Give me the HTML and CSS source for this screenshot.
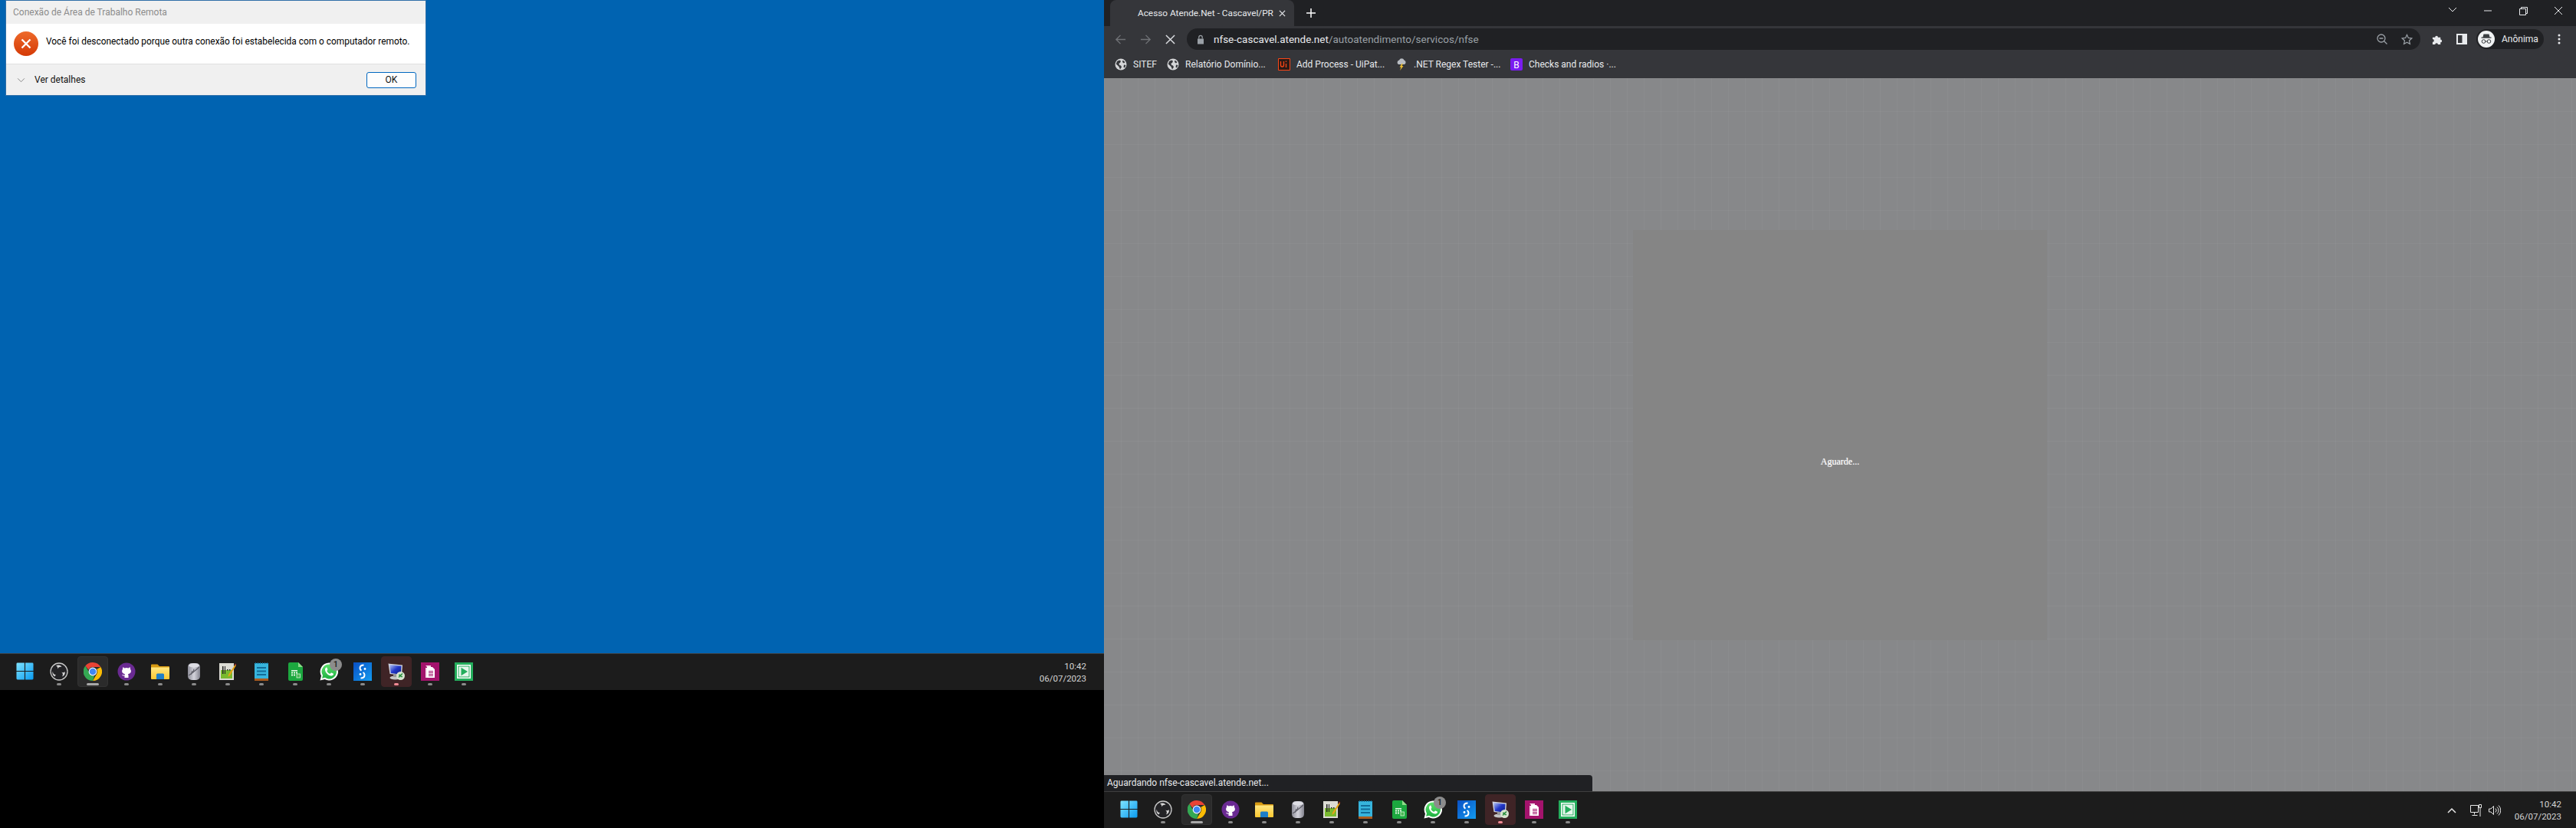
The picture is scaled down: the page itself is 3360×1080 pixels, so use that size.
FILE: index.html
```html
<!DOCTYPE html>
<html lang="pt-BR">
<head>
    <meta charset="UTF-8">
    <title>Área de trabalho</title>
    <link rel="stylesheet" href="styles.css">
</head>
<body>
    <!-- icones da barra de tarefas, usados nos dois monitores -->
    <svg class="defs" width="0" height="0">
        <defs>
            <linearGradient id="winGrad" x1="0" y1="0" x2="1" y2="1">
                <stop offset="0" stop-color="#7fe3ff"/>
                <stop offset="1" stop-color="#0a9bf0"/>
            </linearGradient>
            <linearGradient id="whatsGrad" x1="0" y1="0" x2="0" y2="1">
                <stop offset="0" stop-color="#5ee06c"/>
                <stop offset="1" stop-color="#1fb141"/>
            </linearGradient>
            <linearGradient id="sitefGrad" x1="0" y1="0" x2="1" y2="1">
                <stop offset="0" stop-color="#0a4fc4"/>
                <stop offset="1" stop-color="#129cf0"/>
            </linearGradient>
            <linearGradient id="errGrad" x1="0" y1="0" x2="0" y2="1">
                <stop offset="0" stop-color="#ee6a2a"/>
                <stop offset="1" stop-color="#d43a06"/>
            </linearGradient>
            <linearGradient id="folderGrad" x1="0" y1="0" x2="0" y2="1">
                <stop offset="0" stop-color="#ffe680"/>
                <stop offset="1" stop-color="#fbc730"/>
            </linearGradient>
            <linearGradient id="dbGrad" x1="0" y1="0" x2="1" y2="0">
                <stop offset="0" stop-color="#8d8d98"/>
                <stop offset="0.5" stop-color="#d4d4dc"/>
                <stop offset="1" stop-color="#83838e"/>
            </linearGradient>
            <linearGradient id="rdpGrad" x1="0" y1="0" x2="1" y2="1">
                <stop offset="0" stop-color="#b9c8f5"/>
                <stop offset="0.5" stop-color="#2237c8"/>
                <stop offset="1" stop-color="#0c1a80"/>
            </linearGradient>

            <symbol id="i-win" viewBox="0 0 24 24">
                <path fill="url(#winGrad)" d="M0.5 2A1.5 1.5 0 0 1 2 0.5h9.4v10.9H0.5zM12.6 0.5H22A1.5 1.5 0 0 1 23.5 2v9.4H12.6zM0.5 12.6h10.9v10.9H2A1.5 1.5 0 0 1 0.5 22zM12.6 12.6h10.9V22a1.5 1.5 0 0 1-1.5 1.5h-9.4z"/>
            </symbol>
            <symbol id="i-obs" viewBox="0 0 24 24">
                <circle cx="12" cy="12" r="11" fill="#232326" stroke="#c9c9c9" stroke-width="1.3"/>
                <path fill="#d6d6d6" d="M8 4.500a5 5 0 0 1 7.500 1.500 4.500 4.500 0 0 0-5.500 2.500 3 3 0 0 0-2-4zM19.500 12a5 5 0 0 1-3.500 6.500 4.500 4.500 0 0 0-1-6 3 3 0 0 0 4.500-0.500zM6.500 18.500a5 5 0 0 1-2.500-7 4.500 4.500 0 0 0 4 4.800 3 3 0 0 0-1.500 2.200z"/>
            </symbol>
            <symbol id="i-chrome" viewBox="0 0 24 24">
                <path fill="#ea4335" d="M12 0a12 12 0 0 1 10.400 6H12a6 6 0 0 0-5.600 3.800L2.400 4.500A12 12 0 0 1 12 0z"/>
                <path fill="#fbbc04" d="M22.400 6A12 12 0 0 1 12 24l5.200-9a6 6 0 0 0 0-6z"/>
                <path fill="#34a853" d="M2.400 4.500l4.800 8.500a6 6 0 0 0 7 4.500L12 24A12 12 0 0 1 2.400 4.500z"/>
                <circle cx="12" cy="12" r="5.400" fill="#fff"/>
                <circle cx="12" cy="12" r="4.300" fill="#3f87f4"/>
            </symbol>
            <symbol id="i-github" viewBox="0 0 24 24">
                <circle cx="12" cy="12" r="11.500" fill="#6a2a92"/>
                <path fill="#fff" d="M9.500 20v-2.500c-2.500 0.500-3-1-3.500-1.800 1.200 0 1.700 1.300 3.600 0.800 0-0.600 0.200-1 0.500-1.300-2.300-0.300-4-1.400-4-4 0-1 0.300-1.800 1-2.500-0.200-0.600-0.200-1.500 0.100-2.200 0.900 0 1.800 0.500 2.400 1a8 8 0 0 1 4.800 0c0.600-0.500 1.500-1 2.400-1 0.300 0.700 0.300 1.600 0.100 2.200 0.700 0.700 1 1.500 1 2.500 0 2.600-1.700 3.700-4 4 0.400 0.400 0.600 1 0.600 1.700V20z"/>
            </symbol>
            <symbol id="i-folder" viewBox="0 0 24 24">
                <path fill="#d79a12" d="M0 3.500a1 1 0 0 1 1-1h7.500l2.500 2.500h12a1 1 0 0 1 1 1V12H0z"/>
                <path fill="url(#folderGrad)" d="M0 6.500h24V21a1 1 0 0 1-1 1H1a1 1 0 0 1-1-1z"/>
                <path fill="#1e7fc8" d="M7 16a1.500 1.500 0 0 1 1.500-1.500h7A1.500 1.500 0 0 1 17 16v6H7z"/>
            </symbol>
            <symbol id="i-db" viewBox="0 0 24 24">
                <rect x="4" y="1" width="16" height="22" rx="5" fill="url(#dbGrad)"/>
                <ellipse cx="12" cy="4" rx="7" ry="2.500" fill="#dedee4"/>
                <path fill="none" stroke="#5c5c66" stroke-width="1.200" d="M5 17C9 15 14 10 19 6M8 16l2-5M11 13.500l1-5"/>
            </symbol>
            <symbol id="i-notepad" viewBox="0 0 24 24">
                <path fill="#dcdcd4" d="M1 1h19v22H1z"/>
                <path fill="#79b92e" d="M3 10h15v11H3z"/>
                <path fill="#222" d="M5 5h1.500v10H5zM8 5h1v10H8zM11 9h1.500v1.500H11zM14 9h1.500v1.500H14z"/>
                <path fill="#e8a317" d="M21.500 3l1.500 1-8 13-2.500 2 0.500-3z"/>
                <path fill="#9c2a2a" d="M21.500 1.500l1.800 1-0.800 1.500-1.700-1z"/>
            </symbol>
            <symbol id="i-notebook" viewBox="0 0 24 24">
                <path fill="#37b4dc" d="M3 1h18v20H3z"/>
                <path fill="#a85a1e" d="M3 21h18v3H3z"/>
                <path fill="#126c98" d="M6 6h12v2H6zM6 10.500h12v2H6zM6 15h12v2H6z"/>
                <path fill="#0e6a94" d="M4 0h1v2H4zM7 0h1v2H7zM10 0h1v2h-1zM13 0h1v2h-1zM16 0h1v2h-1zM19 0h1v2h-1z"/>
            </symbol>
            <symbol id="i-calc" viewBox="0 0 24 24">
                <path fill="#1ca83f" d="M3 2a2 2 0 0 1 2-2h11l6 6v16a2 2 0 0 1-2 2H5a2 2 0 0 1-2-2z"/>
                <path fill="#8fdc8a" d="M16 0l6 6h-6z"/>
                <path fill="#e4f6e4" d="M7 10h8v1.500H7zM7 12.500h2v2H7zM10 12.500h2v2h-2zM13 12.500h2v2h-2zM7 15.500h2v2H7zM10 15.500h2v2h-2z"/>
                <rect x="14" y="15" width="4.500" height="5" fill="#47b852" stroke="#d8f2d8" stroke-width="0.800"/>
            </symbol>
            <symbol id="i-whats" viewBox="0 0 24 24">
                <path fill="#fff" d="M12 0.500A11.500 11.500 0 0 0 2 17.500L0.500 23.500l6.200-1.600A11.500 11.500 0 1 0 12 0.500z"/>
                <path fill="url(#whatsGrad)" d="M12 2.500a9.500 9.500 0 0 0-8 14.500l-0.900 3.800 3.900-1A9.500 9.500 0 1 0 12 2.500z"/>
                <path fill="#fff" d="M8.800 6.500c-0.700 0.300-1.800 1.300-1.800 3 0 3.500 4.200 8 8.200 8 1.600 0 2.600-1.200 2.800-2 0.100-0.600-0.100-0.800-0.500-1l-2-1c-0.400-0.200-0.600-0.100-0.900 0.200l-0.800 1c-0.200 0.200-0.500 0.200-0.800 0.100-1.500-0.600-2.800-1.900-3.500-3.300-0.100-0.300-0.100-0.500 0.100-0.700l0.600-0.800c0.200-0.200 0.200-0.400 0.100-0.700L9.600 7c-0.200-0.500-0.400-0.600-0.800-0.500z"/>
            </symbol>
            <symbol id="i-sitef" viewBox="0 0 24 24">
                <rect width="24" height="24" fill="url(#sitefGrad)"/>
                <path fill="none" stroke="#fff" stroke-width="2" d="M13.500 3.500c-3 0-5 1.500-5 4 0 1.500 0.800 2.500 2 3.200M12.500 13c1.200 0.700 2 1.700 2 3.200 0 2.500-2 4.300-5 4.300"/>
                <circle cx="15" cy="8.500" r="1.400" fill="#fff"/>
                <circle cx="9" cy="15.500" r="1.400" fill="#fff"/>
            </symbol>
            <symbol id="i-rdp" viewBox="0 0 24 24">
                <path fill="#cfd3de" d="M1.500 1.500L20 3.500 19 17 3.500 15z"/>
                <path fill="url(#rdpGrad)" d="M3 3l15.500 1.700-0.800 11L4.800 14z"/>
                <ellipse cx="10.500" cy="20" rx="7" ry="2.500" fill="#c5c5c5"/>
                <path fill="#9a9a9a" d="M8 15h5v4H8z"/>
                <circle cx="17.500" cy="17.500" r="5.500" fill="#d8e4d0"/>
                <path fill="none" stroke="#2b8f3c" stroke-width="1.500" d="M15 19.500l2-2M18 16.500l2-2M15 16.500h2.500V18M20 18.500h-2.500"/>
            </symbol>
            <symbol id="i-pink" viewBox="0 0 24 24">
                <rect width="24" height="24" fill="#a3136c"/>
                <path fill="#f5dcea" d="M6 4h7v3H6v13h2V6z"/>
                <path fill="#fff" d="M8 6h7l3 3v11H8z"/>
                <path fill="#a3136c" d="M10 11h6v1h-6zM10 13h6v1h-6zM10 15h6v1h-6zM10 17h6v1h-6z"/>
            </symbol>
            <symbol id="i-play" viewBox="0 0 24 24">
                <rect width="24" height="24" fill="#24ad5c"/>
                <rect x="3" y="3" width="18" height="18" fill="#fff"/>
                <rect x="5" y="5" width="14" height="14" fill="#e6f6ec" stroke="#24ad5c"/>
                <path fill="#24ad5c" d="M8.500 6.800v10.400l8.500-5.200z"/>
            </symbol>
            <symbol id="i-globe" viewBox="0 0 16 16">
                <circle cx="8" cy="8" r="7.500" fill="#d4d5d7"/>
                <path fill="#35363a" d="M3 4l3-1.500 2 1-1 2.500-1.500 0.500L6 9l2 0.500 1 2-2 3L5.500 11 3.500 9 1.800 7.500zM10.500 2.500l3 2.500-1.500 1.500-2-1.500zM12 8.500l2.500 0.500-1.500 3.500-1.500-1z"/>
            </symbol>
        </defs>
    </svg>

    <div class="screen">
        <!-- monitor da esquerda -->
        <div class="monitor monitor-left">
            <div class="desktop">
                <div class="dialog">
                    <div class="dialog-title">Conexão de Área de Trabalho Remota</div>
                    <div class="dialog-body">
                        <svg class="dialog-icon" viewBox="0 0 32 32">
                            <circle cx="16" cy="16" r="16" fill="url(#errGrad)"/>
                            <path stroke="#fff" stroke-width="2.400" d="M10.500 10.500l11 11M21.500 10.500l-11 11"/>
                        </svg>
                        <span class="dialog-msg">Você foi desconectado porque outra conexão foi estabelecida com o computador remoto.</span>
                    </div>
                    <div class="dialog-foot">
                        <svg class="dialog-chevron" viewBox="0 0 12 8"><path fill="none" stroke="#7a7a7a" d="M1 1.500l5 5 5-5"/></svg>
                        <span class="dialog-details">Ver detalhes</span>
                        <button class="dialog-ok">OK</button>
                    </div>
                </div>
            </div>
            <div class="taskbar">
                <div class="task-icons">
                    <div class="task"><svg class="task-start"><use href="#i-win"/></svg></div>
                    <div class="task dot"><svg><use href="#i-obs"/></svg></div>
                    <div class="task dot active"><svg><use href="#i-chrome"/></svg></div>
                    <div class="task dot"><svg><use href="#i-github"/></svg></div>
                    <div class="task dot"><svg><use href="#i-folder"/></svg></div>
                    <div class="task dot"><svg><use href="#i-db"/></svg></div>
                    <div class="task dot"><svg><use href="#i-notepad"/></svg></div>
                    <div class="task dot"><svg><use href="#i-notebook"/></svg></div>
                    <div class="task dot"><svg><use href="#i-calc"/></svg></div>
                    <div class="task dot"><svg><use href="#i-whats"/></svg><span class="badge">1</span></div>
                    <div class="task dot"><svg><use href="#i-sitef"/></svg></div>
                    <div class="task dot flash"><svg><use href="#i-rdp"/></svg></div>
                    <div class="task dot"><svg><use href="#i-pink"/></svg></div>
                    <div class="task dot"><svg><use href="#i-play"/></svg></div>
                </div>
                <div class="clock"><span>10:42</span><span>06/07/2023</span></div>
            </div>
        </div>

        <!-- monitor da direita, chrome -->
        <div class="monitor monitor-right">
            <div class="browser">
                <div class="tabstrip">
                    <div class="tab">
                        <span class="tab-title">Acesso Atende.Net - Cascavel/PR</span>
                        <svg class="tab-close" viewBox="0 0 10 10"><path stroke="#e8eaed" stroke-width="1.300" d="M1 1l8 8M9 1l-8 8"/></svg>
                    </div>
                    <svg class="tab-new" viewBox="0 0 12 12"><path stroke="#fff" stroke-width="1.500" d="M6 0v12M0 6h12"/></svg>
                    <div class="win-btns">
                        <svg viewBox="0 0 46 28"><path fill="none" stroke="#e8eaed" d="M18 10l5 5 5-5"/></svg>
                        <svg viewBox="0 0 46 28"><path stroke="#e8eaed" d="M18 14h10"/></svg>
                        <svg viewBox="0 0 46 28"><path fill="none" stroke="#e8eaed" d="M18.500 11.500h8v8h-8zM20.500 11.500v-2h8v8h-2"/></svg>
                        <svg viewBox="0 0 46 28"><path stroke="#e8eaed" d="M18 9l10 10M28 9L18 19"/></svg>
                    </div>
                </div>
                <div class="toolbar">
                    <svg class="tool tool-back" viewBox="0 0 16 16"><path fill="none" stroke="#6f7175" stroke-width="1.500" d="M15 8H2M8 2L2 8l6 6"/></svg>
                    <svg class="tool tool-fwd" viewBox="0 0 16 16"><path fill="none" stroke="#6f7175" stroke-width="1.500" d="M1 8h13M8 2l6 6-6 6"/></svg>
                    <svg class="tool tool-stop" viewBox="0 0 14 14"><path stroke="#dadce0" stroke-width="1.600" d="M1 1l12 12M13 1L1 13"/></svg>
                    <div class="omnibox">
                        <svg class="lock" viewBox="0 0 10 13"><path fill="#9aa0a6" d="M1 5.500h8v7H1z"/><path fill="none" stroke="#9aa0a6" stroke-width="1.200" d="M2.800 5.500v-2a2.200 2.200 0 0 1 4.400 0v2"/></svg>
                        <span class="url"><b>nfse-cascavel.atende.net</b>/autoatendimento/servicos/nfse</span>
                        <svg class="omni-zoom" viewBox="0 0 14 14"><circle cx="6" cy="6" r="5" fill="none" stroke="#9aa0a6" stroke-width="1.300"/><path stroke="#9aa0a6" stroke-width="1.300" d="M3.500 6h5M9.500 9.500l4 4"/></svg>
                        <svg class="omni-star" viewBox="0 0 16 16"><path fill="none" stroke="#9aa0a6" stroke-width="1.300" d="M8 1.500l2 4.300 4.700 0.600-3.500 3.200 1 4.600L8 11.900l-4.200 2.300 1-4.600L1.300 6.400 6 5.800z"/></svg>
                    </div>
                    <svg class="tool-ext" viewBox="0 0 16 16"><path fill="#e8eaed" d="M1 5h3.500a2 2 0 0 1 4 0H12v3a2 2 0 0 1 0 4v3H8.500a2 2 0 0 0-4 0H1v-3.500a2 2 0 0 0 0-4z"/></svg>
                    <svg class="tool-side" viewBox="0 0 14 14"><path fill="#e8eaed" d="M0 0h14v14H0z"/><path fill="#35363a" d="M2 2h5.500v10H2z"/></svg>
                    <div class="profile">
                        <svg class="avatar" viewBox="0 0 22 22">
                            <circle cx="11" cy="11" r="11" fill="#f1f3f4"/>
                            <path fill="#3c4043" d="M7.500 4.500h7l1 4h2v1.200h-13V8.500h2z"/>
                            <circle cx="7.500" cy="14" r="2.300" fill="none" stroke="#3c4043"/>
                            <circle cx="14.500" cy="14" r="2.300" fill="none" stroke="#3c4043"/>
                            <path stroke="#3c4043" d="M9.800 14h2.400"/>
                        </svg>
                        <span>Anônima</span>
                    </div>
                    <svg class="tool-menu" viewBox="0 0 4 14"><circle cx="2" cy="2" r="1.500" fill="#e8eaed"/><circle cx="2" cy="7" r="1.500" fill="#e8eaed"/><circle cx="2" cy="12" r="1.500" fill="#e8eaed"/></svg>
                </div>
                <div class="bookmarks">
                    <a class="bm bm-1"><svg><use href="#i-globe"/></svg>SITEF</a>
                    <a class="bm bm-2"><svg><use href="#i-globe"/></svg>Relatório Domínio...</a>
                    <a class="bm bm-3">
                        <svg viewBox="0 0 16 16"><path fill="#2a1a16" stroke="#fa4616" d="M0.500 0.500h15v15H0.500z"/><path fill="none" stroke="#fa4616" stroke-width="1.300" d="M3.500 4v5a2 2 0 0 0 4 0V4M10.500 7v5M10.500 3.500V5"/></svg>
                        Add Process - UiPat...
                    </a>
                    <a class="bm bm-4">
                        <svg viewBox="0 0 16 16"><path fill="#b8bcc2" d="M4 8a3 3 0 0 1 1-5.500 3.500 3.500 0 0 1 6.500 0A3 3 0 0 1 12 8z"/><path fill="#f2c230" d="M8.500 7l-3 4.500h2L6 16l4.500-6h-2L10 7z"/></svg>
                        .NET Regex Tester -...
                    </a>
                    <a class="bm bm-5">
                        <svg viewBox="0 0 16 16"><rect width="16" height="16" rx="2" fill="#7a1cf0"/><text x="8" y="12.500" class="bm-b">B</text></svg>
                        Checks and radios ·...
                    </a>
                </div>
                <div class="page">
                    <div class="page-center">
                        <span class="wait">Aguarde...</span>
                    </div>
                    <div class="statusbar">Aguardando nfse-cascavel.atende.net...</div>
                </div>
            </div>
            <div class="taskbar">
                <div class="task-icons">
                    <div class="task"><svg class="task-start"><use href="#i-win"/></svg></div>
                    <div class="task dot"><svg><use href="#i-obs"/></svg></div>
                    <div class="task dot active"><svg><use href="#i-chrome"/></svg></div>
                    <div class="task dot"><svg><use href="#i-github"/></svg></div>
                    <div class="task dot"><svg><use href="#i-folder"/></svg></div>
                    <div class="task dot"><svg><use href="#i-db"/></svg></div>
                    <div class="task dot"><svg><use href="#i-notepad"/></svg></div>
                    <div class="task dot"><svg><use href="#i-notebook"/></svg></div>
                    <div class="task dot"><svg><use href="#i-calc"/></svg></div>
                    <div class="task dot"><svg><use href="#i-whats"/></svg><span class="badge">1</span></div>
                    <div class="task dot"><svg><use href="#i-sitef"/></svg></div>
                    <div class="task dot flash"><svg><use href="#i-rdp"/></svg></div>
                    <div class="task dot"><svg><use href="#i-pink"/></svg></div>
                    <div class="task dot"><svg><use href="#i-play"/></svg></div>
                </div>
                <div class="tray">
                    <svg class="tray-up" viewBox="0 0 12 8"><path fill="none" stroke="#e6e6e6" stroke-width="1.500" d="M1 7l5-5 5 5"/></svg>
                    <svg class="tray-net" viewBox="0 0 16 16"><path fill="none" stroke="#e6e6e6" d="M0.500 1.500h10v9h-10zM5.500 10.500v3M2.500 14.500h7M13 4v12M11.500 0.500h3v4h-3z"/></svg>
                    <svg class="tray-vol" viewBox="0 0 16 14"><path fill="none" stroke="#e6e6e6" d="M0.500 5h2.500l3.500-3.500v11L3 9H0.500zM9 4.500a3.500 3.500 0 0 1 0 5M11 2.500a6 6 0 0 1 0 9M13 0.500a9 9 0 0 1 0 13"/></svg>
                </div>
                <div class="clock"><span>10:42</span><span>06/07/2023</span></div>
            </div>
        </div>
    </div>
</body>
</html>
```

FILE: styles.css
```css
body {
    margin: 0;
    background: #000;
    font-family: Roboto, sans-serif;
    overflow: hidden;
}

.defs {
    position: absolute;
}

.screen {
    display: flex;
    width: 3360px;
    height: 1080px;
}

.monitor {
    display: flex;
    flex-direction: column;
}

.monitor-left {
    width: 1440px;
    height: 900px;
}

.monitor-right {
    width: 1920px;
    height: 1080px;
}

/* desktop e dialogo */
.desktop {
    position: relative;
    flex: 1;
    background: #0063b1;
}

.dialog {
    position: absolute;
    left: 8px;
    top: 1px;
    width: 547px;
    height: 123px;
    background: #f0f0f0;
    box-shadow: 0 0 0 1px #2f6fa8;
}

.dialog-title {
    height: 30px;
    padding-left: 9px;
    font-size: 12px;
    line-height: 30px;
    color: #8c8c8c;
}

.dialog-body {
    display: flex;
    align-items: center;
    gap: 10px;
    height: 52px;
    padding-left: 10px;
    background: #fff;
    border-bottom: 1px solid #dfdfdf;
}

.dialog-icon {
    flex: none;
    width: 32px;
    height: 32px;
    margin-bottom: 1px;
}

.dialog-msg {
    margin-bottom: 6px;
    font-size: 11.9px;
    white-space: nowrap;
    color: #000;
}

.dialog-foot {
    display: flex;
    align-items: center;
    height: 40px;
    padding: 0 12px 0 14px;
}

.dialog-chevron {
    width: 11px;
    height: 7px;
    margin-right: 12px;
}

.dialog-details {
    font-size: 12px;
    color: #111;
}

.dialog-ok {
    width: 65px;
    height: 21px;
    margin-left: auto;
    padding: 0;
    background: #fdfdfd;
    border: 1px solid #0067c0;
    border-radius: 3px;
    font-family: inherit;
    font-size: 12px;
    color: #111;
}

/* barra de tarefas */
.taskbar {
    display: flex;
    align-items: stretch;
    flex: none;
    height: 47px;
    background: #1c1c1c;
    border-top: 1px solid #3f3f3f;
}

.task-icons {
    display: flex;
    padding-left: 10px;
}

.task {
    position: relative;
    display: flex;
    justify-content: center;
    width: 44px;
    height: 40px;
    margin-top: 3px;
    border-radius: 4px;
}

.task:first-child {
    margin-right: 1px;
}

.task svg {
    position: relative;
    width: 24px;
    height: 24px;
    margin-top: 8px;
}

.task .task-start {
    width: 23px;
    height: 23px;
}

.active::before,
.flash::before {
    content: "";
    position: absolute;
    left: 2px;
    right: 2px;
    top: 0;
    bottom: 0;
    box-sizing: border-box;
    border-radius: 4px;
    background: #2b2b2b;
    border: 1px solid #333;
}

.flash::before {
    background: #3f2426;
    border-color: #3f2426;
}

.dot::after {
    content: "";
    position: absolute;
    left: 19px;
    bottom: 2px;
    width: 6px;
    height: 3px;
    border-radius: 2px;
    background: #8a8a8a;
}

.active::after {
    left: 14px;
    width: 16px;
    background: #a8a8a8;
}

.flash::after {
    background: #f08a94;
}

.badge {
    position: absolute;
    left: 23px;
    top: 3px;
    width: 16px;
    height: 16px;
    border-radius: 50%;
    background: #8c8c8c;
    color: #1c1c1c;
    font-size: 11px;
    font-weight: 500;
    line-height: 16px;
    text-align: center;
}

.clock {
    display: flex;
    flex-direction: column;
    justify-content: center;
    align-items: flex-end;
    gap: 2px;
    width: 62px;
    padding-right: 19px;
    font-size: 11.5px;
    line-height: 14px;
    white-space: nowrap;
    color: #d4d4d4;
}

.monitor-left .clock {
    margin-left: auto;
    padding-right: 23px;
}

.tray {
    display: flex;
    align-items: center;
    margin-left: auto;
    margin-right: 17px;
}

.tray-up {
    width: 12px;
    height: 8px;
    margin-right: 18px;
}

.tray-net {
    width: 16px;
    height: 16px;
    margin-right: 8px;
}

.tray-vol {
    width: 16px;
    height: 14px;
}

/* navegador */
.browser {
    display: flex;
    flex-direction: column;
    flex: 1;
}

.tabstrip {
    display: flex;
    align-items: flex-end;
    flex: none;
    height: 34px;
    padding-left: 8px;
    background: #202124;
}

.tab {
    display: flex;
    align-items: center;
    width: 240px;
    height: 34px;
    box-sizing: border-box;
    padding-left: 36px;
    background: #35363a;
    border-radius: 8px 8px 0 0;
}

.tab-title {
    width: 184px;
    font-size: 11.8px;
    white-space: nowrap;
    color: #e8eaed;
}

.tab-close {
    width: 9px;
    height: 9px;
}

.tab-new {
    align-self: center;
    width: 12px;
    height: 12px;
    margin-left: 16px;
}

.win-btns {
    display: flex;
    align-self: flex-start;
    margin-left: auto;
}

.win-btns svg {
    width: 46px;
    height: 28px;
}

.toolbar {
    display: flex;
    align-items: center;
    flex: none;
    height: 34px;
    background: #35363a;
}

.tool {
    flex: none;
}

.tool-back {
    width: 15px;
    height: 15px;
    margin-left: 14px;
}

.tool-fwd {
    width: 15px;
    height: 15px;
    margin-left: 18px;
}

.tool-stop {
    width: 13px;
    height: 13px;
    margin-left: 18px;
}

.omnibox {
    display: flex;
    align-items: center;
    width: 1609px;
    height: 28px;
    margin-left: 15px;
    border-radius: 14px;
    background: #202124;
}

.lock {
    width: 10px;
    height: 13px;
    margin-left: 13px;
}

.url {
    margin-left: 12px;
    font-size: 13.5px;
    color: #9aa0a6;
}

.url b {
    font-weight: 400;
    color: #e8eaed;
}

.omni-zoom {
    width: 14px;
    height: 14px;
    margin-left: auto;
}

.omni-star {
    width: 15px;
    height: 15px;
    margin-left: 18px;
    margin-right: 10px;
}

.tool-ext {
    width: 15px;
    height: 15px;
    margin-left: 15px;
}

.tool-side {
    width: 14px;
    height: 14px;
    margin-left: 17px;
}

.profile {
    display: flex;
    align-items: center;
    gap: 9px;
    width: 88px;
    height: 26px;
    box-sizing: border-box;
    margin-left: 12px;
    padding-left: 2px;
    border-radius: 13px;
    background: #202124;
    font-size: 12px;
    color: #e8eaed;
}

.avatar {
    width: 22px;
    height: 22px;
}

.tool-menu {
    width: 4px;
    height: 14px;
    margin-left: 18px;
}

.bookmarks {
    display: flex;
    align-items: center;
    flex: none;
    height: 32px;
    padding-bottom: 2px;
    background: #35363a;
}

.bm {
    display: flex;
    align-items: center;
    gap: 8px;
    font-size: 12px;
    white-space: nowrap;
    color: #e8eaed;
}

.bm svg {
    width: 16px;
    height: 16px;
    flex: none;
}

.bm-1 {
    width: 68px;
    margin-left: 14px;
}

.bm-2 {
    width: 145px;
}

.bm-3 {
    width: 153px;
}

.bm-4 {
    width: 150px;
}

.bm-b {
    font-family: Roboto, sans-serif;
    font-size: 12px;
    fill: #fff;
    text-anchor: middle;
}

/* conteudo da pagina, com a grade clarinha de fundo */
.page {
    position: relative;
    display: flex;
    justify-content: center;
    flex: 1;
    background-color: #87888a;
    background-image:
        repeating-linear-gradient(90deg, rgba(255, 255, 255, 0.035) 0 1px, transparent 1px 22px),
        repeating-linear-gradient(180deg, rgba(255, 255, 255, 0.035) 0 1px, transparent 1px 43px);
}

.page-center {
    display: flex;
    justify-content: center;
    width: 540px;
    height: 535px;
    margin-top: 198px;
    background: #858585;
}

.wait {
    height: 14px;
    margin-top: 295px;
    font-family: "Liberation Serif", serif;
    font-size: 12px;
    color: #fff;
    text-shadow: 0 0 1px rgba(255, 255, 255, 0.6);
}

.statusbar {
    position: absolute;
    left: 0;
    bottom: 0;
    width: 637px;
    height: 21px;
    box-sizing: border-box;
    padding-left: 4px;
    background: #202124;
    border-radius: 0 4px 0 0;
    font-size: 12px;
    line-height: 20px;
    color: #e8eaed;
}
```
